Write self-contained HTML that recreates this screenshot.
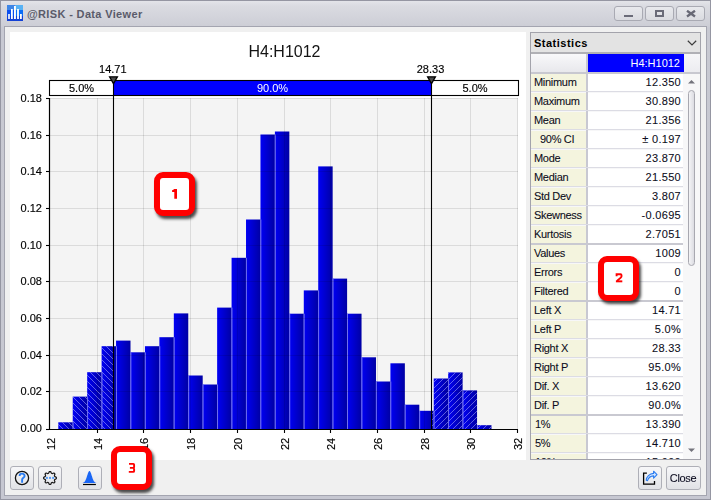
<!DOCTYPE html>
<html><head><meta charset="utf-8"><style>
html,body{margin:0;padding:0}
body{width:711px;height:500px;overflow:hidden;position:relative;background:#d4d5db;font-family:"Liberation Sans",sans-serif;}
.abs{position:absolute}
#frame{position:absolute;left:0;top:0;width:711px;height:500px;box-sizing:border-box;border:1px solid #9596a2;background:linear-gradient(#e3e4e9 0px,#dadbe1 5px,#cdced6 25px,#c8c9d2 27px,#c6c7d1)}
#content{position:absolute;left:4px;top:26px;width:703px;height:470px;box-sizing:border-box;border:1px solid #a4a5b0;background:#f0f0f0}
#chartpanel{position:absolute;left:10px;top:32px;width:516px;height:428px;background:#fff}
.wbtn{position:absolute;top:6px;height:15px;box-sizing:border-box;border:1px solid #a9aab3;border-radius:3px;background:linear-gradient(#e8e9ed,#dadbe0)}
#title{position:absolute;left:27px;top:8px;font-size:11px;letter-spacing:0.35px;font-weight:bold;color:#5a5b6a;white-space:nowrap}
.lab{position:absolute;left:531px;width:55px;height:18px;background:#f4f4de;font-size:11px;letter-spacing:-0.3px;color:#0c0c20;-webkit-text-stroke:0.08px #0c0c20;line-height:16px;text-indent:3px;white-space:pre;overflow:hidden}
.val{position:absolute;left:588px;width:95px;height:18px;background:#fff;font-size:11px;letter-spacing:0.3px;color:#0c0c20;-webkit-text-stroke:0.08px #0c0c20;line-height:16px;text-align:right;box-sizing:border-box;padding-right:2px;white-space:pre;overflow:hidden}
.rb{position:absolute;left:531px;width:152px;height:1px;background:#dcdce4}
.rbt{position:absolute;left:531px;width:152px;height:2px;background:#c9c9d1}
.btn{position:absolute;top:466px;height:24px;box-sizing:border-box;border:1px solid #aeafb7;border-radius:3px;background:linear-gradient(#f7f7f9,#e1e2e6)}
.badge{position:absolute;width:41px;height:44px;box-sizing:border-box;border:6px solid #ff0000;border-radius:9px;background:#fff;box-shadow:2px 3px 3px rgba(0,0,0,0.7);color:#f00;font-weight:bold;font-size:14px;text-align:center;line-height:32px}
</style></head><body>
<div id="frame"></div>
<svg class="abs" style="left:7px;top:5px" width="16" height="16" viewBox="0 0 16 16">
<rect x="0" y="0" width="8" height="5" fill="#3f86e6"/><rect x="8" y="0" width="8" height="5" fill="#58b2f4"/>
<rect x="0" y="5" width="8" height="6" fill="#0b4ff0"/><rect x="8" y="5" width="8" height="6" fill="#0b6df6"/>
<rect x="0" y="11" width="16" height="5" fill="#1341d6"/>
<rect x="1.2" y="9" width="1.6" height="5" fill="#fff"/><rect x="4" y="4" width="1.8" height="10" fill="#fff"/><rect x="7" y="1" width="1.9" height="13" fill="#fff"/><rect x="10.1" y="4" width="1.8" height="10" fill="#fff"/><rect x="13" y="9" width="1.8" height="5" fill="#fff"/>
</svg>
<div id="title">@RISK - Data Viewer</div>
<div class="wbtn" style="left:614px;width:29px"><div class="abs" style="left:9px;top:8px;width:9px;height:2px;background:#6a6b78"></div></div>
<div class="wbtn" style="left:645px;width:29px"><div class="abs" style="left:9px;top:3px;width:9px;height:7px;box-sizing:border-box;border:2px solid #6a6b78;border-top-width:2px"></div></div>
<div class="wbtn" style="left:676px;width:29px"><svg class="abs" style="left:9px;top:3px" width="10" height="8" viewBox="0 0 10 8"><path d="M1,0.7 L9,6.5 M9,0.7 L1,6.5" stroke="#686976" stroke-width="2.3"/></svg></div>
<div id="content"></div>
<div id="chartpanel"></div>
<svg class="abs" style="left:0;top:0;will-change:transform" width="711" height="500" viewBox="0 0 711 500" font-family="Liberation Sans, sans-serif"><defs>
<linearGradient id="bg" x1="0" y1="0" x2="1" y2="0"><stop offset="0" stop-color="#0000f4"/><stop offset="1" stop-color="#0000a4"/></linearGradient>
<pattern id="hb" patternUnits="userSpaceOnUse" width="6" height="6"><path d="M-1,-1 L7,7 M-1,5 L1,7 M5,-1 L7,1" stroke="#b0b0ff" stroke-opacity="0.6" stroke-width="0.9"/></pattern>
<pattern id="hf" patternUnits="userSpaceOnUse" width="6" height="6"><path d="M-1,7 L7,-1 M-1,1 L1,-1 M5,7 L7,5" stroke="#b0b0ff" stroke-opacity="0.6" stroke-width="0.9"/></pattern>
</defs><rect x="50.0" y="98.0" width="468.00" height="331.00" fill="#f4f4f4"/><g fill="url(#bg)"><rect x="58.30" y="422.3" width="14.44" height="6.70"/><rect x="72.74" y="396.6" width="14.44" height="32.40"/><rect x="87.18" y="372.2" width="14.44" height="56.80"/><rect x="101.62" y="346.2" width="14.44" height="82.80"/><rect x="116.06" y="340.6" width="14.44" height="88.40"/><rect x="130.50" y="352.3" width="14.44" height="76.70"/><rect x="144.94" y="346.2" width="14.44" height="82.80"/><rect x="159.38" y="337.2" width="14.44" height="91.80"/><rect x="173.82" y="313.4" width="14.44" height="115.60"/><rect x="188.26" y="375.5" width="14.44" height="53.50"/><rect x="202.70" y="384.5" width="14.44" height="44.50"/><rect x="217.14" y="307.6" width="14.44" height="121.40"/><rect x="231.58" y="257.8" width="14.44" height="171.20"/><rect x="246.02" y="219.5" width="14.44" height="209.50"/><rect x="260.46" y="134.5" width="14.44" height="294.50"/><rect x="274.90" y="131.5" width="14.44" height="297.50"/><rect x="289.34" y="313.7" width="14.44" height="115.30"/><rect x="303.78" y="290.4" width="14.44" height="138.60"/><rect x="318.22" y="166.4" width="14.44" height="262.60"/><rect x="332.66" y="278.6" width="14.44" height="150.40"/><rect x="347.10" y="313.7" width="14.44" height="115.30"/><rect x="361.54" y="357.3" width="14.44" height="71.70"/><rect x="375.98" y="381.5" width="14.44" height="47.50"/><rect x="390.42" y="363.3" width="14.44" height="65.70"/><rect x="404.86" y="404.7" width="14.44" height="24.30"/><rect x="419.30" y="410.8" width="14.44" height="18.20"/><rect x="433.74" y="378.5" width="14.44" height="50.50"/><rect x="448.18" y="372.4" width="14.44" height="56.60"/><rect x="462.62" y="390.4" width="14.44" height="38.60"/><rect x="477.06" y="425.2" width="14.44" height="3.80"/></g><clipPath id="cl"><rect x="0" y="0" width="113.50" height="500"/></clipPath><clipPath id="cr"><rect x="431.50" y="0" width="300" height="500"/></clipPath><g clip-path="url(#cl)" fill="url(#hb)"><rect x="58.30" y="422.3" width="14.44" height="6.70"/><rect x="72.74" y="396.6" width="14.44" height="32.40"/><rect x="87.18" y="372.2" width="14.44" height="56.80"/><rect x="101.62" y="346.2" width="14.44" height="82.80"/><rect x="116.06" y="340.6" width="14.44" height="88.40"/><rect x="130.50" y="352.3" width="14.44" height="76.70"/><rect x="144.94" y="346.2" width="14.44" height="82.80"/><rect x="159.38" y="337.2" width="14.44" height="91.80"/><rect x="173.82" y="313.4" width="14.44" height="115.60"/><rect x="188.26" y="375.5" width="14.44" height="53.50"/><rect x="202.70" y="384.5" width="14.44" height="44.50"/><rect x="217.14" y="307.6" width="14.44" height="121.40"/><rect x="231.58" y="257.8" width="14.44" height="171.20"/><rect x="246.02" y="219.5" width="14.44" height="209.50"/><rect x="260.46" y="134.5" width="14.44" height="294.50"/><rect x="274.90" y="131.5" width="14.44" height="297.50"/><rect x="289.34" y="313.7" width="14.44" height="115.30"/><rect x="303.78" y="290.4" width="14.44" height="138.60"/><rect x="318.22" y="166.4" width="14.44" height="262.60"/><rect x="332.66" y="278.6" width="14.44" height="150.40"/><rect x="347.10" y="313.7" width="14.44" height="115.30"/><rect x="361.54" y="357.3" width="14.44" height="71.70"/><rect x="375.98" y="381.5" width="14.44" height="47.50"/><rect x="390.42" y="363.3" width="14.44" height="65.70"/><rect x="404.86" y="404.7" width="14.44" height="24.30"/><rect x="419.30" y="410.8" width="14.44" height="18.20"/><rect x="433.74" y="378.5" width="14.44" height="50.50"/><rect x="448.18" y="372.4" width="14.44" height="56.60"/><rect x="462.62" y="390.4" width="14.44" height="38.60"/><rect x="477.06" y="425.2" width="14.44" height="3.80"/></g><g clip-path="url(#cr)" fill="url(#hf)"><rect x="58.30" y="422.3" width="14.44" height="6.70"/><rect x="72.74" y="396.6" width="14.44" height="32.40"/><rect x="87.18" y="372.2" width="14.44" height="56.80"/><rect x="101.62" y="346.2" width="14.44" height="82.80"/><rect x="116.06" y="340.6" width="14.44" height="88.40"/><rect x="130.50" y="352.3" width="14.44" height="76.70"/><rect x="144.94" y="346.2" width="14.44" height="82.80"/><rect x="159.38" y="337.2" width="14.44" height="91.80"/><rect x="173.82" y="313.4" width="14.44" height="115.60"/><rect x="188.26" y="375.5" width="14.44" height="53.50"/><rect x="202.70" y="384.5" width="14.44" height="44.50"/><rect x="217.14" y="307.6" width="14.44" height="121.40"/><rect x="231.58" y="257.8" width="14.44" height="171.20"/><rect x="246.02" y="219.5" width="14.44" height="209.50"/><rect x="260.46" y="134.5" width="14.44" height="294.50"/><rect x="274.90" y="131.5" width="14.44" height="297.50"/><rect x="289.34" y="313.7" width="14.44" height="115.30"/><rect x="303.78" y="290.4" width="14.44" height="138.60"/><rect x="318.22" y="166.4" width="14.44" height="262.60"/><rect x="332.66" y="278.6" width="14.44" height="150.40"/><rect x="347.10" y="313.7" width="14.44" height="115.30"/><rect x="361.54" y="357.3" width="14.44" height="71.70"/><rect x="375.98" y="381.5" width="14.44" height="47.50"/><rect x="390.42" y="363.3" width="14.44" height="65.70"/><rect x="404.86" y="404.7" width="14.44" height="24.30"/><rect x="419.30" y="410.8" width="14.44" height="18.20"/><rect x="433.74" y="378.5" width="14.44" height="50.50"/><rect x="448.18" y="372.4" width="14.44" height="56.60"/><rect x="462.62" y="390.4" width="14.44" height="38.60"/><rect x="477.06" y="425.2" width="14.44" height="3.80"/></g><g stroke="#7070f0" stroke-width="1"><line x1="73.14" y1="422.3" x2="73.14" y2="429.0"/><line x1="87.58" y1="396.6" x2="87.58" y2="429.0"/><line x1="102.02" y1="372.2" x2="102.02" y2="429.0"/><line x1="116.46" y1="346.2" x2="116.46" y2="429.0"/><line x1="130.90" y1="352.3" x2="130.90" y2="429.0"/><line x1="145.34" y1="352.3" x2="145.34" y2="429.0"/><line x1="159.78" y1="346.2" x2="159.78" y2="429.0"/><line x1="174.22" y1="337.2" x2="174.22" y2="429.0"/><line x1="188.66" y1="375.5" x2="188.66" y2="429.0"/><line x1="203.10" y1="384.5" x2="203.10" y2="429.0"/><line x1="217.54" y1="384.5" x2="217.54" y2="429.0"/><line x1="231.98" y1="307.6" x2="231.98" y2="429.0"/><line x1="246.42" y1="257.8" x2="246.42" y2="429.0"/><line x1="260.86" y1="219.5" x2="260.86" y2="429.0"/><line x1="275.30" y1="134.5" x2="275.30" y2="429.0"/><line x1="289.74" y1="313.7" x2="289.74" y2="429.0"/><line x1="304.18" y1="313.7" x2="304.18" y2="429.0"/><line x1="318.62" y1="290.4" x2="318.62" y2="429.0"/><line x1="333.06" y1="278.6" x2="333.06" y2="429.0"/><line x1="347.50" y1="313.7" x2="347.50" y2="429.0"/><line x1="361.94" y1="357.3" x2="361.94" y2="429.0"/><line x1="376.38" y1="381.5" x2="376.38" y2="429.0"/><line x1="390.82" y1="381.5" x2="390.82" y2="429.0"/><line x1="405.26" y1="404.7" x2="405.26" y2="429.0"/><line x1="419.70" y1="410.8" x2="419.70" y2="429.0"/><line x1="434.14" y1="410.8" x2="434.14" y2="429.0"/><line x1="448.58" y1="378.5" x2="448.58" y2="429.0"/><line x1="463.02" y1="390.4" x2="463.02" y2="429.0"/><line x1="477.46" y1="425.2" x2="477.46" y2="429.0"/></g><g stroke="#000" stroke-opacity="0.1" stroke-width="1"><line x1="50.0" y1="391.50" x2="518.0" y2="391.50"/><line x1="50.0" y1="355.50" x2="518.0" y2="355.50"/><line x1="50.0" y1="318.50" x2="518.0" y2="318.50"/><line x1="50.0" y1="281.50" x2="518.0" y2="281.50"/><line x1="50.0" y1="245.50" x2="518.0" y2="245.50"/><line x1="50.0" y1="208.50" x2="518.0" y2="208.50"/><line x1="50.0" y1="171.50" x2="518.0" y2="171.50"/><line x1="50.0" y1="135.50" x2="518.0" y2="135.50"/><line x1="50.0" y1="98.50" x2="518.0" y2="98.50"/><line x1="97.50" y1="98.0" x2="97.50" y2="429.0"/><line x1="143.50" y1="98.0" x2="143.50" y2="429.0"/><line x1="190.50" y1="98.0" x2="190.50" y2="429.0"/><line x1="237.50" y1="98.0" x2="237.50" y2="429.0"/><line x1="284.50" y1="98.0" x2="284.50" y2="429.0"/><line x1="330.50" y1="98.0" x2="330.50" y2="429.0"/><line x1="377.50" y1="98.0" x2="377.50" y2="429.0"/><line x1="424.50" y1="98.0" x2="424.50" y2="429.0"/><line x1="470.50" y1="98.0" x2="470.50" y2="429.0"/><line x1="517.50" y1="98.0" x2="517.50" y2="429.0"/></g><line x1="49.5" y1="98.0" x2="49.5" y2="430" stroke="#000" stroke-width="1.2"/><line x1="49" y1="429.5" x2="518.0" y2="429.5" stroke="#000" stroke-width="1.2"/><g stroke="#000" stroke-width="1.1"><line x1="46" y1="429.50" x2="49.5" y2="429.50"/><line x1="46" y1="391.50" x2="49.5" y2="391.50"/><line x1="46" y1="355.50" x2="49.5" y2="355.50"/><line x1="46" y1="318.50" x2="49.5" y2="318.50"/><line x1="46" y1="281.50" x2="49.5" y2="281.50"/><line x1="46" y1="245.50" x2="49.5" y2="245.50"/><line x1="46" y1="208.50" x2="49.5" y2="208.50"/><line x1="46" y1="171.50" x2="49.5" y2="171.50"/><line x1="46" y1="135.50" x2="49.5" y2="135.50"/><line x1="46" y1="98.50" x2="49.5" y2="98.50"/><line x1="97.50" y1="429" x2="97.50" y2="433"/><line x1="143.50" y1="429" x2="143.50" y2="433"/><line x1="190.50" y1="429" x2="190.50" y2="433"/><line x1="237.50" y1="429" x2="237.50" y2="433"/><line x1="284.50" y1="429" x2="284.50" y2="433"/><line x1="330.50" y1="429" x2="330.50" y2="433"/><line x1="377.50" y1="429" x2="377.50" y2="433"/><line x1="424.50" y1="429" x2="424.50" y2="433"/><line x1="470.50" y1="429" x2="470.50" y2="433"/><line x1="517.50" y1="429" x2="517.50" y2="433"/></g><g font-size="11" fill="#000" stroke="#000" stroke-width="0.15"><text x="42" y="431.80" text-anchor="end">0.00</text><text x="42" y="395.00" text-anchor="end">0.02</text><text x="42" y="359.00" text-anchor="end">0.04</text><text x="42" y="322.00" text-anchor="end">0.06</text><text x="42" y="285.00" text-anchor="end">0.08</text><text x="42" y="249.00" text-anchor="end">0.10</text><text x="42" y="212.00" text-anchor="end">0.12</text><text x="42" y="175.00" text-anchor="end">0.14</text><text x="42" y="139.00" text-anchor="end">0.16</text><text x="42" y="102.00" text-anchor="end">0.18</text></g><g font-size="11" fill="#000" stroke="#000" stroke-width="0.15"><text transform="translate(54.50,437.8) rotate(-90)" text-anchor="end">12</text><text transform="translate(101.50,437.8) rotate(-90)" text-anchor="end">14</text><text transform="translate(147.50,437.8) rotate(-90)" text-anchor="end">16</text><text transform="translate(194.50,437.8) rotate(-90)" text-anchor="end">18</text><text transform="translate(241.50,437.8) rotate(-90)" text-anchor="end">20</text><text transform="translate(288.50,437.8) rotate(-90)" text-anchor="end">22</text><text transform="translate(334.50,437.8) rotate(-90)" text-anchor="end">24</text><text transform="translate(381.50,437.8) rotate(-90)" text-anchor="end">26</text><text transform="translate(428.50,437.8) rotate(-90)" text-anchor="end">28</text><text transform="translate(474.50,437.8) rotate(-90)" text-anchor="end">30</text><text transform="translate(521.50,437.8) rotate(-90)" text-anchor="end">32</text></g><rect x="49.5" y="80.5" width="64.00" height="15" fill="#fff"/><rect x="113.50" y="80.5" width="318.00" height="15" fill="#0000ff"/><rect x="431.50" y="80.5" width="87.00" height="15" fill="#fff"/><rect x="49.5" y="80.5" width="469" height="15" fill="none" stroke="#000" stroke-width="1.1"/><text x="81.50" y="91.8" text-anchor="middle" font-size="11" fill="#000" stroke="#000" stroke-width="0.15">5.0%</text><text x="272.50" y="91.8" text-anchor="middle" font-size="11" fill="#fff">90.0%</text><text x="475.00" y="91.8" text-anchor="middle" font-size="11" fill="#000" stroke="#000" stroke-width="0.15">5.0%</text><line x1="113.50" y1="80" x2="113.50" y2="429.0" stroke="#000" stroke-width="1.1"/><line x1="431.50" y1="80" x2="431.50" y2="429.0" stroke="#000" stroke-width="1.1"/><path d="M109.60,76.8 L117.40,76.8 L113.50,83.6 Z" fill="#4a4a4a" stroke="#000" stroke-width="1.3" stroke-linejoin="miter"/><path d="M427.60,76.8 L435.40,76.8 L431.50,83.6 Z" fill="#4a4a4a" stroke="#000" stroke-width="1.3" stroke-linejoin="miter"/><text x="112.80" y="73" text-anchor="middle" font-size="11" fill="#000" stroke="#000" stroke-width="0.15">14.71</text><text x="430.50" y="73" text-anchor="middle" font-size="11" fill="#000" stroke="#000" stroke-width="0.15">28.33</text><text x="284.5" y="57" text-anchor="middle" font-size="16" fill="#141414">H4:H1012</text></svg>
<!-- stats panel -->
<div class="abs" style="left:530px;top:32px;width:171px;height:428px;box-sizing:border-box;border:1px solid #a3a3ab;background:#f7f7f8"></div>
<div class="abs" style="left:531px;top:33px;width:169px;height:19px;background:#e3e3e3;border-bottom:2px solid #b0b0b5"></div>
<div class="abs" style="left:534px;top:37px;font-size:11px;letter-spacing:0.5px;font-weight:bold;color:#000">Statistics</div>
<svg class="abs" style="left:687px;top:40px" width="10" height="6" viewBox="0 0 10 6"><path d="M0.8,0.8 L5,4.9 L9.2,0.8" fill="none" stroke="#3c3c3c" stroke-width="1.2"/></svg>
<div class="abs" style="left:531px;top:54px;width:55px;height:18px;background:linear-gradient(#f8f8fa,#e8e8ec)"></div>
<div class="abs" style="left:586px;top:54px;width:2px;height:405px;background:#c8c8d2"></div>
<div class="abs" style="left:588px;top:54px;width:96px;height:18px;background:#0000ff;color:#fff;font-size:11px;line-height:18px;text-align:right;box-sizing:border-box;padding-right:4px">H4:H1012</div>
<div class="abs" style="left:684px;top:54px;width:16px;height:18px;background:linear-gradient(#f6f6f8,#ececf0)"></div>
<div class="abs" style="left:531px;top:72px;width:169px;height:2px;background:#c8c8d0"></div>
<div class="abs" style="left:531px;top:74px;width:169px;height:385px;overflow:hidden"><div class="abs" style="left:-531px;top:-74px;width:711px;height:500px"><div class="lab" style="top:74px;">Minimum</div><div class="val" style="top:74px">12.350</div><div class="rb" style="top:91px"></div><div class="lab" style="top:93px;">Maximum</div><div class="val" style="top:93px">30.890</div><div class="rb" style="top:110px"></div><div class="lab" style="top:112px;">Mean</div><div class="val" style="top:112px">21.356</div><div class="rb" style="top:129px"></div><div class="lab" style="top:131px;text-indent:9px">90% CI</div><div class="val" style="top:131px">± 0.197</div><div class="rb" style="top:148px"></div><div class="lab" style="top:150px;">Mode</div><div class="val" style="top:150px">23.870</div><div class="rb" style="top:167px"></div><div class="lab" style="top:169px;">Median</div><div class="val" style="top:169px">21.550</div><div class="rb" style="top:186px"></div><div class="lab" style="top:188px;">Std Dev</div><div class="val" style="top:188px">3.807</div><div class="rb" style="top:205px"></div><div class="lab" style="top:207px;">Skewness</div><div class="val" style="top:207px">-0.0695</div><div class="rb" style="top:224px"></div><div class="lab" style="top:226px;">Kurtosis</div><div class="val" style="top:226px">2.7051</div><div class="rbt" style="top:243px"></div><div class="lab" style="top:245px;">Values</div><div class="val" style="top:245px">1009</div><div class="rb" style="top:262px"></div><div class="lab" style="top:264px;">Errors</div><div class="val" style="top:264px">0</div><div class="rb" style="top:281px"></div><div class="lab" style="top:283px;">Filtered</div><div class="val" style="top:283px">0</div><div class="rbt" style="top:300px"></div><div class="lab" style="top:302px;">Left X</div><div class="val" style="top:302px">14.71</div><div class="rb" style="top:319px"></div><div class="lab" style="top:321px;">Left P</div><div class="val" style="top:321px">5.0%</div><div class="rb" style="top:338px"></div><div class="lab" style="top:340px;">Right X</div><div class="val" style="top:340px">28.33</div><div class="rb" style="top:357px"></div><div class="lab" style="top:359px;">Right P</div><div class="val" style="top:359px">95.0%</div><div class="rb" style="top:376px"></div><div class="lab" style="top:378px;">Dif. X</div><div class="val" style="top:378px">13.620</div><div class="rb" style="top:395px"></div><div class="lab" style="top:397px;">Dif. P</div><div class="val" style="top:397px">90.0%</div><div class="rbt" style="top:414px"></div><div class="lab" style="top:416px;text-indent:4px">1%</div><div class="val" style="top:416px">13.390</div><div class="rb" style="top:433px"></div><div class="lab" style="top:435px;text-indent:4px">5%</div><div class="val" style="top:435px">14.710</div><div class="rb" style="top:452px"></div><div class="lab" style="top:454px;text-indent:4px">10%</div><div class="val" style="top:454px">15.990</div></div></div>
<svg class="abs" style="left:687px;top:79px" width="9" height="5" viewBox="0 0 9 5"><path d="M1,4.5 L4.5,1 L8,4.5 Z" fill="#74747c"/></svg>
<div class="abs" style="left:688px;top:90px;width:7px;height:176px;box-sizing:border-box;border:1px solid #a8a8b0;border-radius:4px;background:linear-gradient(to right,#f4f4f6,#dcdce2)"></div>
<svg class="abs" style="left:687px;top:448px" width="9" height="5" viewBox="0 0 9 5"><path d="M1,0.5 L4.5,4 L8,0.5 Z" fill="#74747c"/></svg>
<!-- buttons -->
<div class="btn" style="left:10px;width:24px"><svg class="abs" style="left:3px;top:3px" width="16" height="16" viewBox="0 0 16 16"><circle cx="8" cy="8" r="6.6" fill="none" stroke="#111" stroke-width="1.3"/><path d="M5.6,5.9 C5.6,2.9 10.6,2.9 10.6,5.9 C10.6,7.7 8.1,8 8.1,9.8 L8.1,12.8" fill="none" stroke="#2a7cf0" stroke-width="1.9"/></svg></div>
<div class="btn" style="left:38px;width:24px"><svg class="abs" style="left:3px;top:3px" width="16" height="16" viewBox="0 0 16 16"><path d="M8.00,1.55 L7.58,1.63 L7.19,1.88 L6.90,2.46 L6.67,3.05 L6.42,3.34 L6.14,3.52 L5.83,3.59 L5.44,3.56 L4.86,3.30 L4.24,3.10 L3.79,3.20 L3.44,3.44 L3.20,3.79 L3.10,4.24 L3.30,4.86 L3.56,5.44 L3.59,5.83 L3.52,6.14 L3.34,6.42 L3.05,6.67 L2.46,6.90 L1.88,7.19 L1.63,7.58 L1.55,8.00 L1.63,8.42 L1.88,8.81 L2.46,9.10 L3.05,9.33 L3.34,9.58 L3.52,9.86 L3.59,10.17 L3.56,10.56 L3.30,11.14 L3.10,11.76 L3.20,12.21 L3.44,12.56 L3.79,12.80 L4.24,12.90 L4.86,12.70 L5.44,12.44 L5.83,12.41 L6.14,12.48 L6.42,12.66 L6.67,12.95 L6.90,13.54 L7.19,14.12 L7.58,14.37 L8.00,14.45 L8.42,14.37 L8.81,14.12 L9.10,13.54 L9.33,12.95 L9.58,12.66 L9.86,12.48 L10.17,12.41 L10.56,12.44 L11.14,12.70 L11.76,12.90 L12.21,12.80 L12.56,12.56 L12.80,12.21 L12.90,11.76 L12.70,11.14 L12.44,10.56 L12.41,10.17 L12.48,9.86 L12.66,9.58 L12.95,9.33 L13.54,9.10 L14.12,8.81 L14.37,8.42 L14.45,8.00 L14.37,7.58 L14.12,7.19 L13.54,6.90 L12.95,6.67 L12.66,6.42 L12.48,6.14 L12.41,5.83 L12.44,5.44 L12.70,4.86 L12.90,4.24 L12.80,3.79 L12.56,3.44 L12.21,3.20 L11.76,3.10 L11.14,3.30 L10.56,3.56 L10.17,3.59 L9.86,3.52 L9.58,3.34 L9.33,3.05 L9.10,2.46 L8.81,1.88 L8.42,1.63 L8.00,1.55Z" fill="none" stroke="#1a1a1a" stroke-width="1.2" stroke-linejoin="round"/><rect x="3.9" y="6.9" width="2" height="2" fill="#5a9ef5"/><rect x="7" y="6.9" width="2" height="2" fill="#5a9ef5"/><rect x="10.1" y="6.9" width="2" height="2" fill="#5a9ef5"/></svg></div>
<div class="btn" style="left:78px;width:24px"><svg class="abs" style="left:3px;top:3px" width="16" height="16" viewBox="0 0 16 16"><path d="M0.8,13.1 L0.80,12.82 L1.02,12.76 L1.25,12.68 L1.47,12.59 L1.69,12.48 L1.92,12.34 L2.14,12.16 L2.36,11.96 L2.59,11.72 L2.81,11.43 L3.03,11.10 L3.26,10.72 L3.48,10.29 L3.70,9.82 L3.93,9.29 L4.15,8.71 L4.37,8.10 L4.60,7.44 L4.82,6.76 L5.04,6.06 L5.27,5.35 L5.49,4.65 L5.71,3.98 L5.94,3.34 L6.16,2.75 L6.38,2.22 L6.61,1.78 L6.83,1.43 L7.05,1.18 L7.28,1.03 L7.50,1.00 L7.72,1.08 L7.95,1.28 L8.17,1.57 L8.39,1.97 L8.62,2.45 L8.84,3.00 L9.06,3.62 L9.29,4.28 L9.51,4.96 L9.73,5.67 L9.96,6.37 L10.18,7.07 L10.40,7.74 L10.63,8.38 L10.85,8.98 L11.07,9.53 L11.30,10.04 L11.52,10.49 L11.74,10.90 L11.97,11.26 L12.19,11.56 L12.41,11.83 L12.64,12.06 L12.86,12.25 L13.08,12.40 L13.31,12.53 L13.53,12.64 L13.75,12.72 L13.98,12.79 L14.20,12.84 L14.2,13.1 Z" fill="#1a66f5"/><rect x="1" y="13.9" width="12.9" height="1.2" fill="#000"/></svg></div>
<div class="btn" style="left:638px;width:24px"><svg class="abs" style="left:3px;top:3px" width="18" height="18" viewBox="0 0 18 18"><path d="M4.9,3.1 L1.6,3.1 L1.6,14.2 L12.5,14.2 L12.5,11" fill="none" stroke="#000" stroke-width="1.3"/><path d="M4.2,10.3 C4.4,6.8 7.5,3.6 11.6,3.4 L11.6,1.2 L15,4.6 L11.6,8.2 L11.6,5.9 C8.8,6 6.5,7.5 5.5,10.6 Z" fill="#d4e6ff" stroke="#2a7cf0" stroke-width="1.1" stroke-linejoin="round"/></svg></div>
<div class="btn" style="left:666px;width:35px;font-size:11px;letter-spacing:-0.35px;color:#0c0c20;-webkit-text-stroke:0.08px #0c0c20;text-align:center;line-height:22px;padding-right:1px;box-sizing:border-box">Close</div>
<div class="badge" style="left:154px;top:172px"></div>
<div class="badge" style="left:598px;top:256px;height:45px"></div>
<div class="badge" style="left:111px;top:446px"></div>
<svg class="abs" style="left:0;top:0" width="711" height="500" viewBox="0 0 711 500">
<path d="M174.3,189 L177,189 L177,198.8 L174.3,198.8 L174.3,191.9 L172.1,191.9 L172.1,190.2 Q173.4,189.8 174.3,189 Z" fill="#f00"/>
<path d="M616.6,276.3 L616.6,274.3 L620.6,274.3 Q621.5,274.3 621.5,275.3 L621.5,276.3 Q621.5,277 620.8,277.6 L616.9,280.9" fill="none" stroke="#f00" stroke-width="1.9"/>
<rect x="615.9" y="280.4" width="6.4" height="1.9" fill="#f00"/>
<path d="M129,463.9 L133.3,463.9 Q134.1,463.9 134.1,464.8 L134.1,466.9 Q134.1,467.9 133.2,467.9 L129.9,467.9 M133.2,467.9 Q134.1,467.9 134.1,468.9 L134.1,471 Q134.1,471.9 133.2,471.9 L128.8,471.9" fill="none" stroke="#f00" stroke-width="1.9"/>
</svg>
</body></html>
